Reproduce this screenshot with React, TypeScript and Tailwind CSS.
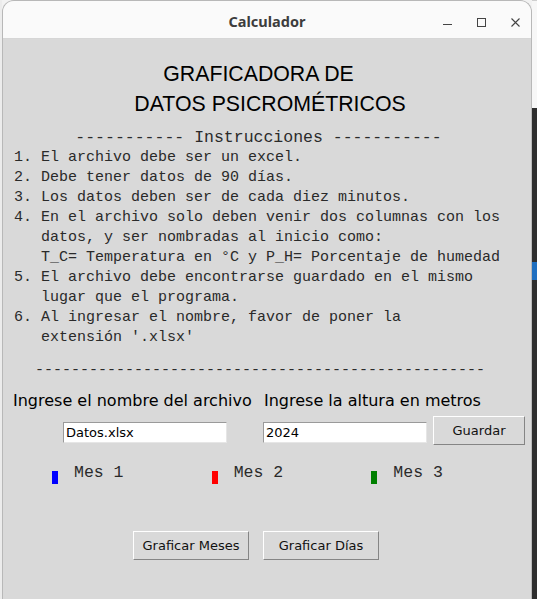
import React from "react"

// Instrucciones que muestra la ventana (monoespaciada, con sangría de 3 espacios)
const instrucciones: string[] = [
	"1. El archivo debe ser un excel.",
	"2. Debe tener datos de 90 días.",
	"3. Los datos deben ser de cada diez minutos.",
	"4. En el archivo solo deben venir dos columnas con los",
	"   datos, y ser nombradas al inicio como:",
	"   T_C= Temperatura en °C y P_H= Porcentaje de humedad",
	"5. El archivo debe encontrarse guardado en el mismo",
	"   lugar que el programa.",
	"6. Al ingresar el nombre, favor de poner la",
	"   extensión '.xlsx'",
]

interface Mes {
	id: string
	label: string
	color: string // clase de tailwind para el marcador
}

const meses: Mes[] = [
	{ id: "m1", label: "Mes 1", color: "bg-[#0000ff]" },
	{ id: "m2", label: "Mes 2", color: "bg-[#ff0000]" },
	{ id: "m3", label: "Mes 3", color: "bg-[#008000]" },
]

const mono = "font-['Liberation_Mono','Courier_New',monospace]"
const sans = "font-['DejaVu_Sans','Noto_Sans',sans-serif]"

function TkButton({ text, className }: { text: string; className: string }) {
	return (
		<button
			className={`${className} h-[29px] flex items-center justify-center bg-[#d9d9d9] border border-t-white border-l-white border-b-[#858585] border-r-[#858585] text-[13px] text-[#111] ${sans}`}
		>
			{text}
		</button>
	)
}

function TkEntry({ value, className }: { value: string; className: string }) {
	return (
		<div
			className={`${className} w-[164px] h-[21px] bg-white border border-t-[#9a9a9a] border-l-[#9a9a9a] border-b-[#e6e6e6] border-r-[#e6e6e6] flex items-center pl-[2px] text-[13px] text-black ${sans}`}
		>
			{value}
		</div>
	)
}

export default function App() {
	return (
		<div className="flex w-[537px] h-[599px] overflow-hidden bg-[#f2f2f2]">
			{/* borde del escritorio a la izquierda */}
			<div className="w-[2px] shrink-0 bg-[#ececec]" />

			{/* Ventana */}
			<div className="w-[530px] shrink-0 flex flex-col rounded-t-[12px] border border-b-0 border-[#b8b8b8] overflow-hidden bg-[#d9d9d9]">
				{/* Barra de título */}
				<div className="h-[38px] shrink-0 grid grid-cols-[1fr_auto_1fr] items-center pt-[4px] bg-[#fafafa] border-b border-[#d6d6d6]">
					<div />
					<span className="text-[14.5px] font-bold text-[#3d3d3d] font-['Noto_Sans',sans-serif]">
						Calculador
					</span>
					<div className="flex justify-end gap-[18px] pr-[8px]">
						<svg width="16" height="16" viewBox="0 0 16 16" className="text-[#444]">
							<path d="M4 10.5h9" stroke="currentColor" strokeWidth="1" />
						</svg>
						<svg width="16" height="16" viewBox="0 0 16 16" className="text-[#444]">
							<rect x="4.5" y="4.5" width="8" height="8" fill="none" stroke="currentColor" strokeWidth="1" />
						</svg>
						<svg width="16" height="16" viewBox="0 0 16 16" className="text-[#444]">
							<path d="M4.5 4.5l8 8M12.5 4.5l-8 8" stroke="currentColor" strokeWidth="1.1" />
						</svg>
					</div>
				</div>

				{/* Contenido */}
				<div className="flex flex-col text-black">
					{/* Encabezado */}
					<div className="pt-[20px] text-[21.3px] leading-[30px] font-['Liberation_Sans',Arial,sans-serif]">
						<div className="text-center pr-[17px]">GRAFICADORA DE</div>
						<div className="text-center pl-[6px]">DATOS PSICROMÉTRICOS</div>
					</div>

					{/* Instrucciones */}
					<div className={`mt-[9px] text-center pr-[17px] text-[16.5px] leading-[20px] whitespace-pre text-[#2a2a2a] ${mono}`}>
						----------- Instrucciones -----------
					</div>
					<div className={`pl-[11px] text-[15px] leading-[20px] whitespace-pre text-[#2a2a2a] ${mono}`}>
						{instrucciones.map((linea, i) => (
							<div key={i}>{linea}</div>
						))}
					</div>
					<div className={`mt-[13px] pl-[32px] text-[15px] leading-[20px] whitespace-pre text-[#2a2a2a] ${mono}`}>
						{"-".repeat(50)}
					</div>

					{/* Etiquetas */}
					<div className={`mt-[10px] flex text-[16px] leading-[19px] ${sans}`}>
						<div className="w-[261px] pl-[10px]">Ingrese el nombre del archivo</div>
						<div>Ingrese la altura en metros</div>
					</div>

					{/* Entradas */}
					<div className="mt-[6px] flex items-start">
						<TkEntry value="Datos.xlsx" className="ml-[60px] mt-[6px]" />
						<TkEntry value="2024" className="ml-[36px] mt-[6px]" />
						<TkButton text="Guardar" className="ml-[6px] w-[92px]" />
					</div>

					{/* Leyenda de meses */}
					<div className="mt-[18px] flex pl-[49px]">
						{meses.map((mes) => (
							<div key={mes.id} className="w-[160px] flex items-start">
								<div className={`w-[6px] h-[13px] mt-[8px] ${mes.color}`} />
								<span className={`ml-[16px] text-[16.5px] leading-[20px] whitespace-pre text-[#2a2a2a] ${mono}`}>
									{mes.label}
								</span>
							</div>
						))}
					</div>

					{/* Botones para graficar */}
					<div className="mt-[47px] flex pl-[130px] gap-[14px]">
						<TkButton text="Graficar Meses" className="w-[116px]" />
						<TkButton text="Graficar Días" className="w-[116px]" />
					</div>
				</div>
			</div>

			{/* escritorio a la derecha */}
			<div className="w-[5px] shrink-0 flex flex-col">
				<div className="h-[108px] bg-[#f7f7f7] border-t border-[#cfcfcf]" />
				<div className="flex-1 bg-[#2e2e2e] flex flex-col">
					<div className="mt-[154px] h-[18px] bg-[#1f6fc0]" />
				</div>
			</div>
		</div>
	)
}
